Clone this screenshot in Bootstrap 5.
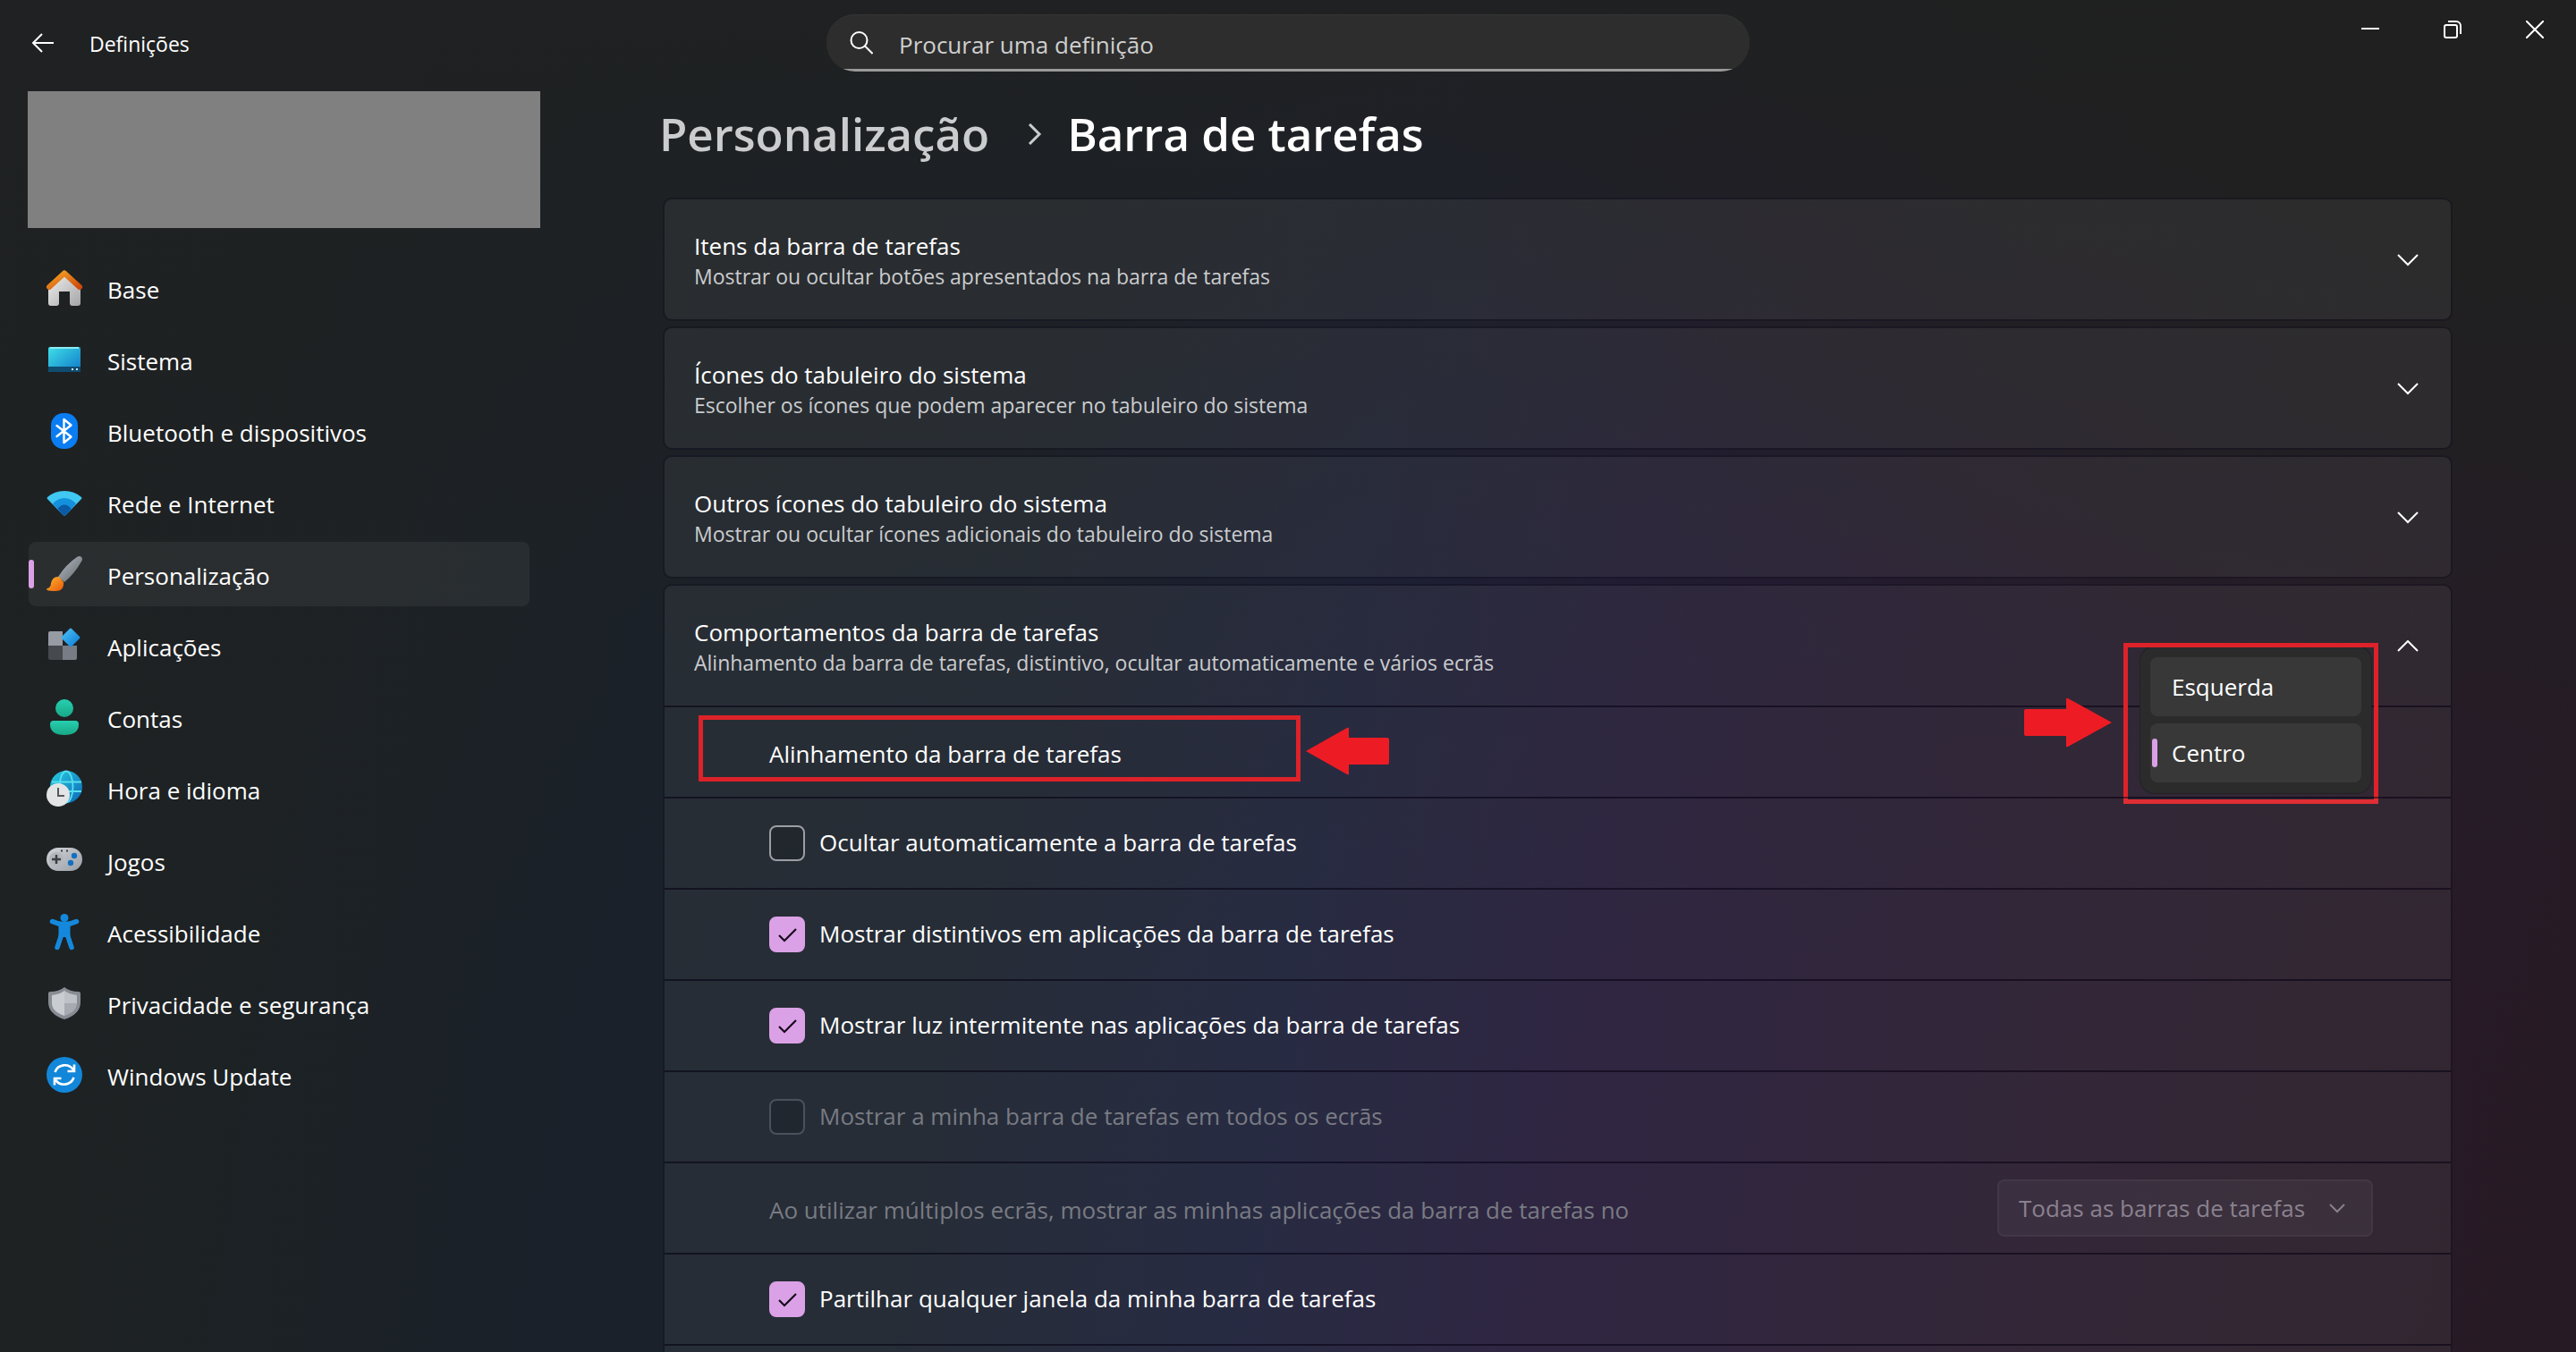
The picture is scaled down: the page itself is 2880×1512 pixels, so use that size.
<!DOCTYPE html>
<html lang="pt" data-bs-theme="dark">
<head>
<meta charset="utf-8">
<meta name="viewport" content="width=device-width, initial-scale=1">
<title>Definições</title>
<link href="https://cdn.jsdelivr.net/npm/bootstrap@5.3.0/dist/css/bootstrap.min.css" rel="stylesheet">
<style>
  :root { --accent: #dba1e6; --line: rgba(14, 10, 26, .55); --fill: rgba(255, 255, 255, .055); --soft: #cbccce; }
  body {
    font-family: "Open Sans", "Noto Sans", sans-serif; font-size: 26px; line-height: 36px; color: #fff;
    background:
      radial-gradient(ellipse 45% 55% at 100% 0, #202020 25%, transparent),
      linear-gradient(to bottom, #1f2122 0, rgba(31, 33, 34, .75) 12%, rgba(31, 33, 36, .25) 45%, transparent 75%),
      linear-gradient(100deg, #1f2222 0, #1d2224 14%, #1a212a 28%, #1a212c 40%, #1b1f38 52%, #231a38 62%, #271a30 74%, #281b29 88%, #261a24 100%);
  }
  .titlebar { height: 102px; }
  .side-half { flex: 1 1 0; }
  .back-btn { width: 48px; height: 48px; margin: 24px 0 0 24px; }
  .app-name { font-size: 23px; margin: 31px 0 0 28px; }
  .search-box { width: 1032px; height: 64px; margin-top: 16px; padding: 0 26px; gap: 29px; border-radius: 32px;
    background: linear-gradient(#2d2d2d 61px, #9a9a9a 61px); box-shadow: inset 0 1px 0 #343434; }
  .search-box input { font-size: 26px; color: #fff; margin-top: 4px; }
  .search-box input::placeholder { color: #cfcfcf; opacity: 1; }
  .win-btn { width: 92px; height: 62px; }
  .sidebar { width: 640px; padding-left: 31px; }
  .account { width: 573px; height: 153px; background: #808080; margin-bottom: 31px; }
  .side-nav { width: 561px; padding-left: 1px; gap: 8px; }
  .side-nav .nav-link { height: 72px; padding: 4px 20px 0; gap: 28px; border-radius: 8px; color: #fff; position: relative; }
  .side-nav .nav-link.active { background: var(--fill); }
  .side-nav .nav-link.active::before, .choice.active::before {
    content: ""; position: absolute; left: 0; top: 20px; width: 6px; height: 32px; border-radius: 3px; background: var(--accent); }
  .side-nav svg { width: 40px; height: 40px; margin-bottom: 4px; flex: none; overflow: visible; }
  .content { padding: 0 138px 0 101px; }
  .crumbs { height: 94px; margin-bottom: 25px; font-size: 51px; line-height: 94px; font-weight: 600; margin-left: -4px; }
  .crumbs a { color: #cbccce; }
  .crumbs svg { margin: 2px 28px 0 43px; }
  .setting-stack { gap: 6px; }
  .setting-group { border: 2px solid rgba(14, 10, 26, .3); border-radius: 10px; }
  .setting-group > * { background: var(--fill); background-clip: padding-box; }
  .setting-head { height: 134px; padding: 2px 36px 0 33px; color: #fff; border: 0; border-radius: 8px; }
  .setting-group.open .setting-head { border-radius: 8px 8px 0 0; }
  .setting-head small { font-size: 23px; line-height: 33px; color: var(--soft); }
  .setting-row { height: 102px; padding: 0 87px 0 117px; border-top: 2px solid var(--line); position: relative; }
  .setting-row .form-check { gap: 16px; min-height: 0; }
  .form-check-input.tick { width: 40px; height: 40px; border: 2px solid #9b9ea4; border-radius: 8px; background-color: rgba(0, 0, 0, .12); }
  .form-check-input.tick:checked { border-color: var(--accent); background-color: var(--accent); background-size: 40px 40px;
    background-image: url("data:image/svg+xml,%3Csvg xmlns='http://www.w3.org/2000/svg' viewBox='0 0 40 40'%3E%3Cpath d='M11 21l6 6 13-13' fill='none' stroke='%23140a18' stroke-width='2.2'/%3E%3C/svg%3E"); }
  .form-check-input.tick:disabled { border-color: #4c505a; opacity: 1; }
  .setting-row .form-check-label { color: #fff; padding-bottom: 2px; }
  .setting-row .form-check-input:disabled ~ .form-check-label { opacity: 1; color: #797b83; }
  .row-title { padding-top: 4px; }
  .row-title.dim { color: #797b83; }
  .form-select.screens { width: 420px; height: 64px; padding: 0 60px 0 22px; border: 2px solid rgba(255, 255, 255, .04); border-radius: 8px;
    font-size: 26px; line-height: 36px; color: #8a818f; background-color: rgba(255, 255, 255, .045); background-size: 20px 20px; background-position: right 28px center;
    background-image: url("data:image/svg+xml,%3Csvg xmlns='http://www.w3.org/2000/svg' viewBox='0 0 20 20'%3E%3Cpath d='M2 6l8 8 8-8' fill='none' stroke='%238a818f' stroke-width='2'/%3E%3C/svg%3E"); }
  .callout-box { position: absolute; border: 5px solid #dd2229; }
  .callout-box.on-label { left: 38px; top: 9px; width: 673px; height: 74px; }
  .callout-box.on-menu { right: 81px; top: -72px; width: 285px; height: 180px; }
  .callout-arrow { position: absolute; fill: #ed1c24; }
  .callout-arrow.to-label { left: 717px; top: 22px; }
  .callout-arrow.to-menu { right: 379px; top: -11px; }
  .align-menu { position: absolute; right: 89px; top: -68px; width: 258px; padding: 12px 11px; gap: 8px; border-radius: 16px;
    background: #2b2b2b; box-shadow: 0 0 0 1px #242026; }
  .choice { position: relative; height: 66px; padding: 0 24px; border: 0; border-radius: 8px; background: #383838; color: #fff; }
  .choice.active::before { left: 2px; top: 17px; }
</style>
<script src="https://cdn.jsdelivr.net/npm/bootstrap@5.3.0/dist/js/bootstrap.bundle.min.js"></script>
</head>
<body class="vh-100 overflow-hidden d-flex flex-column">

<header class="titlebar d-flex align-items-start flex-shrink-0">
  <div class="side-half d-flex align-items-start">
    <button class="back-btn btn p-0 d-flex align-items-center justify-content-center" aria-label="Anterior">
      <svg width="26" height="26" viewBox="0 0 26 26" fill="none" stroke="#fff" stroke-width="2"><path d="M25 13H2M12 3L2 13l10 10"/></svg>
    </button>
    <span class="app-name">Definições</span>
  </div>
  <label class="search-box d-flex align-items-center">
    <svg class="flex-shrink-0" width="26" height="28" viewBox="0 0 26 28" fill="none" stroke="#fff" stroke-width="2"><circle cx="10.500" cy="11" r="9"/><path d="M17 17.500l8.500 8.500"/></svg>
    <input class="form-control border-0 bg-transparent shadow-none p-0" type="search" placeholder="Procurar uma definição" aria-label="Procurar uma definição">
  </label>
  <div class="side-half d-flex justify-content-end">
    <button class="win-btn btn p-0" aria-label="Minimizar"><svg width="20" height="20" stroke="#fff" stroke-width="2"><path d="M0 9h20"/></svg></button>
    <button class="win-btn btn p-0" aria-label="Restaurar"><svg width="20" height="20" fill="none" stroke="#fff" stroke-width="2"><rect x="1" y="5" width="14" height="14" rx="2"/><path d="M5 1h9a5 5 0 0 1 5 5v9"/></svg></button>
    <button class="win-btn btn p-0" aria-label="Fechar"><svg width="20" height="20" stroke="#fff" stroke-width="2"><path d="M0 0l20 20M20 0L0 20"/></svg></button>
  </div>
</header>

<div class="d-flex flex-grow-1 overflow-hidden">
  <aside class="sidebar flex-shrink-0">
    <div class="account"></div>
    <nav class="side-nav nav flex-column">
      <a href="#" class="nav-link d-flex align-items-center">
        <svg viewBox="0 0 40 40"><defs><linearGradient id="hw" x2="1" y2="1"><stop stop-color="#f2f2f2"/><stop offset="1" stop-color="#a5a5a7"/></linearGradient><linearGradient id="hr" x2="1" y2="1"><stop stop-color="#f5a623"/><stop offset="1" stop-color="#d0480c"/></linearGradient></defs><path d="M2 18L20 3l18 15v19q0 3-3 3h-6q-3 0-3-3V24H14v13q0 3-3 3H5q-3 0-3-3z" fill="url(#hw)"/><path d="M3 19L20 3.500l17 15.500" fill="none" stroke="url(#hr)" stroke-width="6" stroke-linecap="round" stroke-linejoin="round"/></svg>Base</a>
      <a href="#" class="nav-link d-flex align-items-center">
        <svg viewBox="0 0 40 40"><defs><linearGradient id="sy" x2="1" y2="1"><stop stop-color="#3fe0e8"/><stop offset="1" stop-color="#0f78c8"/></linearGradient></defs><rect x="2" y="6" width="36" height="28" rx="2" fill="url(#sy)"/><path d="M2 28h36v4q0 2-2 2H4q-2 0-2-2z" fill="#104b70"/><path d="M4 7h32" stroke="#8cecf3" stroke-width="2"/><path d="M28 31h2M33 31h2" stroke="#cceef8" stroke-width="2"/></svg>Sistema</a>
      <a href="#" class="nav-link d-flex align-items-center">
        <svg viewBox="0 0 40 40"><rect x="5" y="0" width="30" height="40" rx="14" fill="#0a7df2"/><path d="M11.500 14l16 12.500-8 6.500V7l8 6.500-16 12.500" fill="none" stroke="#fff" stroke-width="2.400" stroke-linejoin="round" stroke-linecap="round"/></svg>Bluetooth e dispositivos</a>
      <a href="#" class="nav-link d-flex align-items-center">
        <svg viewBox="0 0 40 40"><path d="M1 16q-1-1 0-2Q9 7 20 7t19 7q1 1 0 2L22 33.500q-2 2-4 0z" fill="#40c8f2"/><path d="M7 21.500Q12 15 20 15t13 6.500L22 33.500q-2 2-4 0z" fill="#1590dc"/><path d="M12.500 27q3-4.500 7.500-4.500t7.500 4.500L22 33.500q-2 2-4 0z" fill="#0b5aa6"/></svg>Rede e Internet</a>
      <a href="#" class="nav-link active d-flex align-items-center" aria-current="page">
        <svg viewBox="0 0 40 40"><defs><linearGradient id="bh" x2="1" y2="1"><stop stop-color="#b9bec3"/><stop offset="1" stop-color="#5c646b"/></linearGradient><linearGradient id="bt" x2="1" y2="1"><stop stop-color="#ffb730"/><stop offset="1" stop-color="#e8590c"/></linearGradient></defs><path d="M13 23Q22 9 34 1q3-2 5 0t0 5q-8 14-19 23z" fill="url(#bh)"/><path d="M1 36q4-1 4-6 2-8 9-7l5 6q1 10-9 10-7 0-9-1-2-1 0-2z" fill="url(#bt)"/></svg>Personalização</a>
      <a href="#" class="nav-link d-flex align-items-center">
        <svg viewBox="0 0 40 40"><defs><linearGradient id="ad" x2="1" y2="1"><stop stop-color="#4fc6f8"/><stop offset="1" stop-color="#0a78d4"/></linearGradient></defs><path d="M4 4h14v16H2V6q0-2 2-2z" fill="#979ba4"/><path d="M2 20h16v16H4q-2 0-2-2z" fill="#46494d"/><path d="M18 20h16v14q0 2-2 2H18z" fill="#777c85"/><path d="M26 1q1-1 2 0l9 9q1 1 0 2l-9 9q-1 1-2 0l-9-9q-1-1 0-2z" fill="url(#ad)"/></svg>Aplicações</a>
      <a href="#" class="nav-link d-flex align-items-center">
        <svg viewBox="0 0 40 40"><defs><linearGradient id="ct" x2="0" y2="1"><stop stop-color="#27cfb0"/><stop offset="1" stop-color="#18a886"/></linearGradient></defs><circle cx="20" cy="10" r="10" fill="url(#ct)"/><path d="M8 24h24q4 0 4 4 0 12-16 12T4 28q0-4 4-4z" fill="url(#ct)"/></svg>Contas</a>
      <a href="#" class="nav-link d-flex align-items-center">
        <svg viewBox="0 0 40 40"><defs><linearGradient id="gl" x2="1" y2="1"><stop stop-color="#27cfe0"/><stop offset="1" stop-color="#0d67b8"/></linearGradient></defs><circle cx="22" cy="18" r="18" fill="url(#gl)"/><g fill="none" stroke="#58dff0" stroke-width="1.800"><path d="M6 12.500h33M6 23h33"/><ellipse cx="22" cy="18" rx="7.500" ry="17.500"/></g><circle cx="13" cy="27" r="13" fill="#e3e4e6"/><path d="M13 19v9h7" fill="none" stroke="#55585c" stroke-width="2"/></svg>Hora e idioma</a>
      <a href="#" class="nav-link d-flex align-items-center">
        <svg viewBox="0 0 40 40"><defs><linearGradient id="jg" x2="1" y2="1"><stop stop-color="#d2d6da"/><stop offset="1" stop-color="#999ea5"/></linearGradient></defs><rect y="6" width="40" height="26" rx="13" fill="url(#jg)"/><circle cx="11" cy="19" r="8" fill="#b3b7bc"/><path d="M11 14v10M6 19h10" stroke="#3b3e42" stroke-width="2.500"/><path d="M16 9.500h2M22 9.500h2" stroke="#3b3e42" stroke-width="2"/><circle cx="31" cy="15" r="3.200" fill="#1470c0"/><circle cx="27" cy="23" r="3.200" fill="#1470c0"/></svg>Jogos</a>
      <a href="#" class="nav-link d-flex align-items-center">
        <svg viewBox="0 0 40 40"><g fill="#1489dc"><circle cx="20" cy="4.500" r="4.500"/><path d="M13.500 11h13v15h-13z"/></g><path d="M6.500 8.500Q20 15 33.500 8.500M16.500 24L12 37.500M23.500 24L28 37.500" fill="none" stroke="#1489dc" stroke-width="5.500" stroke-linecap="round"/></svg>Acessibilidade</a>
      <a href="#" class="nav-link d-flex align-items-center">
        <svg viewBox="0 0 40 40"><path d="M20 2q6 5 16 5 2 0 2 2v10q0 13-18 19Q2 32 2 19V9q0-2 2-2 10 0 16-5z" fill="#888d94"/><path d="M20 6q-5 4-14 5v9q0 9 14 14z" fill="#c9cdd2"/><path d="M20 6q5 4 14 5v9q0 9-14 14z" fill="#a7abb1"/><path d="M20 6q5 4 14 5v9H20z" fill="#bec2c7"/></svg>Privacidade e segurança</a>
      <a href="#" class="nav-link d-flex align-items-center">
        <svg viewBox="0 0 40 40"><circle cx="20" cy="20" r="20" fill="#1287d9"/><g fill="none" stroke="#fff" stroke-width="2.600"><path d="M9.500 17A11.500 11.500 0 0 1 30 14.500M30.500 23A11.500 11.500 0 0 1 10 25.500"/><path d="M31 8.500v7.500h-7.500M9 31.500V24h7.500"/></g></svg>Windows Update</a>
    </nav>
  </aside>

  <main class="content flex-grow-1">
    <h1 class="crumbs d-flex align-items-center">
      <a href="#" class="text-decoration-none">Personalização</a>
      <svg width="16" height="24" fill="none" stroke="#cbccce" stroke-width="3"><path d="M2 1l11 11L2 23"/></svg>
      <span>Barra de tarefas</span>
    </h1>

    <div class="setting-stack d-flex flex-column">
      <section class="setting-group">
        <button class="setting-head w-100 d-flex align-items-center justify-content-between text-start">
          <span class="d-flex flex-column">Itens da barra de tarefas<small>Mostrar ou ocultar botões apresentados na barra de tarefas</small></span>
          <svg width="24" height="14" fill="none" stroke="#fff" stroke-width="2"><path d="M1 1l11 11L23 1"/></svg>
        </button>
      </section>
      <section class="setting-group">
        <button class="setting-head w-100 d-flex align-items-center justify-content-between text-start">
          <span class="d-flex flex-column">Ícones do tabuleiro do sistema<small>Escolher os ícones que podem aparecer no tabuleiro do sistema</small></span>
          <svg width="24" height="14" fill="none" stroke="#fff" stroke-width="2"><path d="M1 1l11 11L23 1"/></svg>
        </button>
      </section>
      <section class="setting-group">
        <button class="setting-head w-100 d-flex align-items-center justify-content-between text-start">
          <span class="d-flex flex-column">Outros ícones do tabuleiro do sistema<small>Mostrar ou ocultar ícones adicionais do tabuleiro do sistema</small></span>
          <svg width="24" height="14" fill="none" stroke="#fff" stroke-width="2"><path d="M1 1l11 11L23 1"/></svg>
        </button>
      </section>
      <section class="setting-group open">
        <button class="setting-head w-100 d-flex align-items-center justify-content-between text-start" aria-expanded="true">
          <span class="d-flex flex-column">Comportamentos da barra de tarefas<small>Alinhamento da barra de tarefas, distintivo, ocultar automaticamente e vários ecrãs</small></span>
          <svg width="24" height="14" fill="none" stroke="#fff" stroke-width="2"><path d="M1 12L12 1l11 11"/></svg>
        </button>
        <div class="setting-row d-flex align-items-center">
          <span class="row-title" id="alignLabel">Alinhamento da barra de tarefas</span>
          <div class="callout-box on-label"></div>
          <svg class="callout-arrow to-label" width="94" height="54"><path d="M0 27L46 1q2-1 2 1v10h43q2 0 2 2v26q0 2-2 2H48v10q0 2-2 1z"/></svg>
          <div class="align-menu d-flex flex-column" role="listbox" aria-labelledby="alignLabel">
            <button class="choice text-start" role="option">Esquerda</button>
            <button class="choice active text-start" role="option" aria-selected="true">Centro</button>
          </div>
          <div class="callout-box on-menu"></div>
          <svg class="callout-arrow to-menu" width="98" height="56"><path d="M98 28L49 55q-2 1-2-1V43H2q-2 0-2-2V15q0-2 2-2h45V2q0-2 2-1z"/></svg>
        </div>
        <div class="setting-row d-flex align-items-center">
          <div class="form-check d-flex align-items-center p-0 m-0"><input class="form-check-input tick m-0" type="checkbox" id="c1"><label class="form-check-label" for="c1">Ocultar automaticamente a barra de tarefas</label></div>
        </div>
        <div class="setting-row d-flex align-items-center">
          <div class="form-check d-flex align-items-center p-0 m-0"><input class="form-check-input tick m-0" type="checkbox" id="c2" checked><label class="form-check-label" for="c2">Mostrar distintivos em aplicações da barra de tarefas</label></div>
        </div>
        <div class="setting-row d-flex align-items-center">
          <div class="form-check d-flex align-items-center p-0 m-0"><input class="form-check-input tick m-0" type="checkbox" id="c3" checked><label class="form-check-label" for="c3">Mostrar luz intermitente nas aplicações da barra de tarefas</label></div>
        </div>
        <div class="setting-row d-flex align-items-center">
          <div class="form-check d-flex align-items-center p-0 m-0"><input class="form-check-input tick m-0" type="checkbox" id="c4" disabled><label class="form-check-label" for="c4">Mostrar a minha barra de tarefas em todos os ecrãs</label></div>
        </div>
        <div class="setting-row d-flex align-items-center justify-content-between">
          <label class="row-title dim" for="screens">Ao utilizar múltiplos ecrãs, mostrar as minhas aplicações da barra de tarefas no</label>
          <select class="form-select screens" id="screens" disabled><option>Todas as barras de tarefas</option></select>
        </div>
        <div class="setting-row d-flex align-items-center">
          <div class="form-check d-flex align-items-center p-0 m-0"><input class="form-check-input tick m-0" type="checkbox" id="c5" checked><label class="form-check-label" for="c5">Partilhar qualquer janela da minha barra de tarefas</label></div>
        </div>
        <div class="setting-row"></div>
      </section>
    </div>
  </main>
</div>
</body>
</html>
